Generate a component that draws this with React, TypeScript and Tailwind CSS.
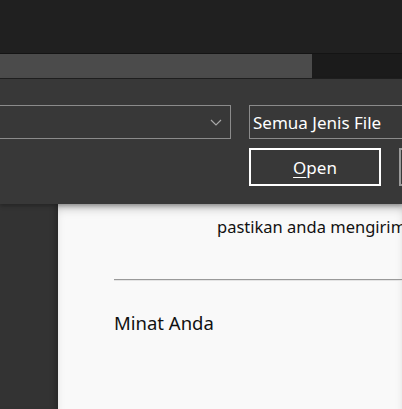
import React from 'react';

const sans = "font-['Noto_Sans','Open_Sans',sans-serif]";

export default function App() {
  return (
    <div className={`w-[402px] h-[409px] overflow-hidden bg-[#f9f9f9] flex flex-col ${sans}`}>
      {/* window title area */}
      <div className="h-[53px] bg-[#202020] shrink-0" />
      <div className="h-px bg-[#141414] shrink-0" />
      <div className="h-[24px] flex shrink-0">
        <div className="w-[312px] bg-[#4b4b4b]" />
        <div className="flex-1 bg-[#1b1b1b]" />
      </div>
      <div className="h-px bg-[#1f1f1f] shrink-0" />

      {/* dialog footer */}
      <div className="h-[125px] bg-[#383838] shrink-0 pt-[26px] flex flex-col gap-[9px] relative z-10 shadow-[0_2px_4px_rgba(0,0,0,0.25)]">
        <div className="flex items-center gap-[18px]">
          <div className="ml-[-20px] w-[251px] h-[34px] border border-[#8b8b8b] flex items-center justify-end pr-[8px] shrink-0">
            <svg width="12" height="7" viewBox="0 0 12 7" fill="none">
              <path d="M1 1l5 5 5-5" stroke="#a8a8a8" strokeWidth="1.2" />
            </svg>
          </div>
          <div className="w-[200px] h-[34px] border border-[#8b8b8b] flex items-center pl-[3px] shrink-0 text-white text-[17px] leading-none">
            Semua Jenis File
          </div>
        </div>
        <div className="flex items-center gap-[18px] pl-[249px]">
          <button className="w-[132px] h-[38px] border-2 border-white flex items-center justify-center text-white text-[17px] leading-none shrink-0">
            <span><span className="underline underline-offset-[3px]">O</span>pen</span>
          </button>
          <button className="w-[132px] h-[38px] border-2 border-[#9a9a9a] shrink-0" />
        </div>
      </div>

      {/* page behind */}
      <div className="flex-1 flex">
        <div className="w-[58px] bg-[#333333] shrink-0 shadow-[inset_-6px_0_6px_-4px_rgba(0,0,0,0.25)]" />
        <div className="flex-1 min-w-0 bg-[#f9f9f9] shadow-[inset_0_8px_12px_-6px_rgba(0,0,0,0.35)] pt-[11px] text-[#111] overflow-hidden">
          <p className="pl-[159px] text-[16.5px] leading-[24px] whitespace-nowrap">pastikan anda mengirim</p>
          <hr className="ml-[56px] mt-[40px] border-t border-b border-t-[#9a9a9a] border-b-[#e4e4e4]" />
          <p className="pl-[56px] mt-[30px] text-[18.5px] leading-[24px] whitespace-nowrap">Minat Anda</p>
        </div>
      </div>
    </div>
  );
}
